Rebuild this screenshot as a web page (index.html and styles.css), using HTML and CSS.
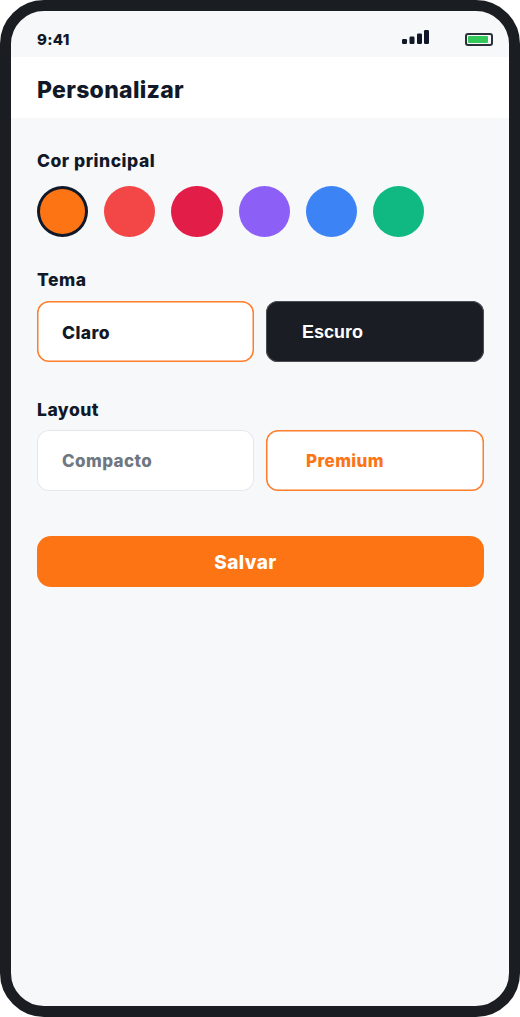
FILE: index.html
```html
<!DOCTYPE html>
<html lang="pt">
<head>
<meta charset="UTF-8">
<meta name="viewport" content="width=device-width, initial-scale=1.0">
<title>Personalizar</title>
<link rel="stylesheet" href="styles.css">
</head>
<body>
<div class="phone">
    <div class="status-bar">
        <span class="time">9:41</span>
        <div class="status-icons">
            <svg class="signal" width="27" height="14" viewBox="0 0 27 14">
                <rect x="0" y="9" width="5" height="5" rx="1.2" fill="#111827"/>
                <rect x="7.5" y="6.5" width="5" height="7.5" rx="1.2" fill="#111827"/>
                <rect x="15" y="3.5" width="5" height="10.5" rx="1.2" fill="#111827"/>
                <rect x="22" y="0" width="5" height="14" rx="1.2" fill="#111827"/>
            </svg>
            <div class="battery"><div class="battery-level"></div></div>
        </div>
    </div>
    <header class="page-header">
        <h1>Personalizar</h1>
    </header>
    <main class="content">
        <section class="colors-section">
            <h2>Cor principal</h2>
            <div class="swatches">
                <div class="swatch swatch-orange selected"></div>
                <div class="swatch swatch-red"></div>
                <div class="swatch swatch-rose"></div>
                <div class="swatch swatch-purple"></div>
                <div class="swatch swatch-blue"></div>
                <div class="swatch swatch-green"></div>
            </div>
        </section>
        <section class="theme-section">
            <h2>Tema</h2>
            <div class="options">
                <div class="option option-active">Claro</div>
                <div class="option option-dark">Escuro</div>
            </div>
        </section>
        <section class="layout-section">
            <h2>Layout</h2>
            <div class="options">
                <div class="option option-muted">Compacto</div>
                <div class="option option-premium">Premium</div>
            </div>
        </section>
        <button class="save-btn" type="button">Salvar</button>
    </main>
</div>
</body>
</html>
```
FILE: styles.css
```css
* {
    box-sizing: border-box;
}

body {
    margin: 0;
    background-color: #fff;
    font-family: Inter, "Liberation Sans", sans-serif;
    color: #111827;
}

.phone {
    width: 520px;
    height: 1017px;
    border: 11px solid #1a1d21;
    border-radius: 44px;
    background-color: #f7f8fa;
    overflow: hidden;
}

.status-bar {
    height: 46px;
    padding: 0 16px 0 26px;
    display: flex;
    align-items: center;
    justify-content: space-between;
}

.time {
    font-size: 15px;
    font-weight: 800;
    letter-spacing: 0.3px;
    margin-top: 10px;
}

.status-icons {
    display: flex;
    align-items: center;
    gap: 36px;
    margin-top: 6px;
}

.battery {
    width: 28px;
    height: 13px;
    margin-top: 4px;
    padding: 1px 3px 1px 1px;
    border: 2px solid #2a2f38;
    border-radius: 3px;
}

.battery-level {
    height: 100%;
    background-color: #34c759;
    border-radius: 1px;
}

.page-header {
    height: 61px;
    padding: 4px 26px 0;
    display: flex;
    align-items: center;
    background-color: #fff;
}

h1 {
    margin: 0;
    font-size: 23px;
    font-weight: 800;
    letter-spacing: 0.3px;
}

.content {
    padding: 32px 25px 0 26px;
}

h2 {
    margin: 0;
    font-size: 17.5px;
    line-height: 22px;
    font-weight: 800;
    letter-spacing: 0.5px;
}

.swatches {
    display: flex;
    gap: 16px;
    margin-top: 14px;
}

.swatch {
    width: 51.2px;
    height: 51px;
    border-radius: 50%;
}

.swatch.selected {
    border: 3px solid #111827;
}

.swatch-orange { background-color: #fd7415; }
.swatch-red { background-color: #f34747; }
.swatch-rose { background-color: #e21d48; }
.swatch-purple { background-color: #8c5ff6; }
.swatch-blue { background-color: #3c83f6; }
.swatch-green { background-color: #10b981; }

.theme-section {
    margin-top: 32px;
}

.layout-section {
    margin-top: 37px;
}

.options {
    display: grid;
    grid-template-columns: 217px 218px;
    gap: 12px;
    margin-top: 10px;
}

.layout-section .options {
    margin-top: 9px;
}

.option {
    height: 61px;
    padding-left: 25px;
    padding-top: 1px;
    display: flex;
    align-items: center;
    border-radius: 12px;
    font-size: 17.5px;
    font-weight: 800;
    letter-spacing: 0.4px;
}

.option-active {
    background-color: #fff;
    box-shadow: inset 0 0 0 1.5px #fd7e2c;
}

.option-dark {
    padding-left: 36px;
    background-color: #1a1d23;
    box-shadow: inset 0 0 0 1px #4b4e55;
    color: #fff;
    font-family: "Liberation Sans", Arial, sans-serif;
    font-size: 18px;
    font-weight: 700;
    letter-spacing: 0;
}

.option-muted {
    padding-top: 0;
    background-color: #fff;
    box-shadow: inset 0 0 0 1px #e5e7eb;
    color: #6f7782;
    font-size: 17px;
}

.option-premium {
    padding-left: 40px;
    padding-top: 0;
    background-color: #fff;
    box-shadow: inset 0 0 0 1.5px #fd7e2c;
    color: #fd7415;
    font-size: 17px;
}

.save-btn {
    display: block;
    width: 447px;
    height: 51px;
    margin-top: 45px;
    padding: 2px 30px 0 0;
    border: none;
    border-radius: 14px;
    background-color: #fd7415;
    color: #fff;
    font-family: inherit;
    font-size: 19px;
    font-weight: 800;
    letter-spacing: 0.4px;
}
```
